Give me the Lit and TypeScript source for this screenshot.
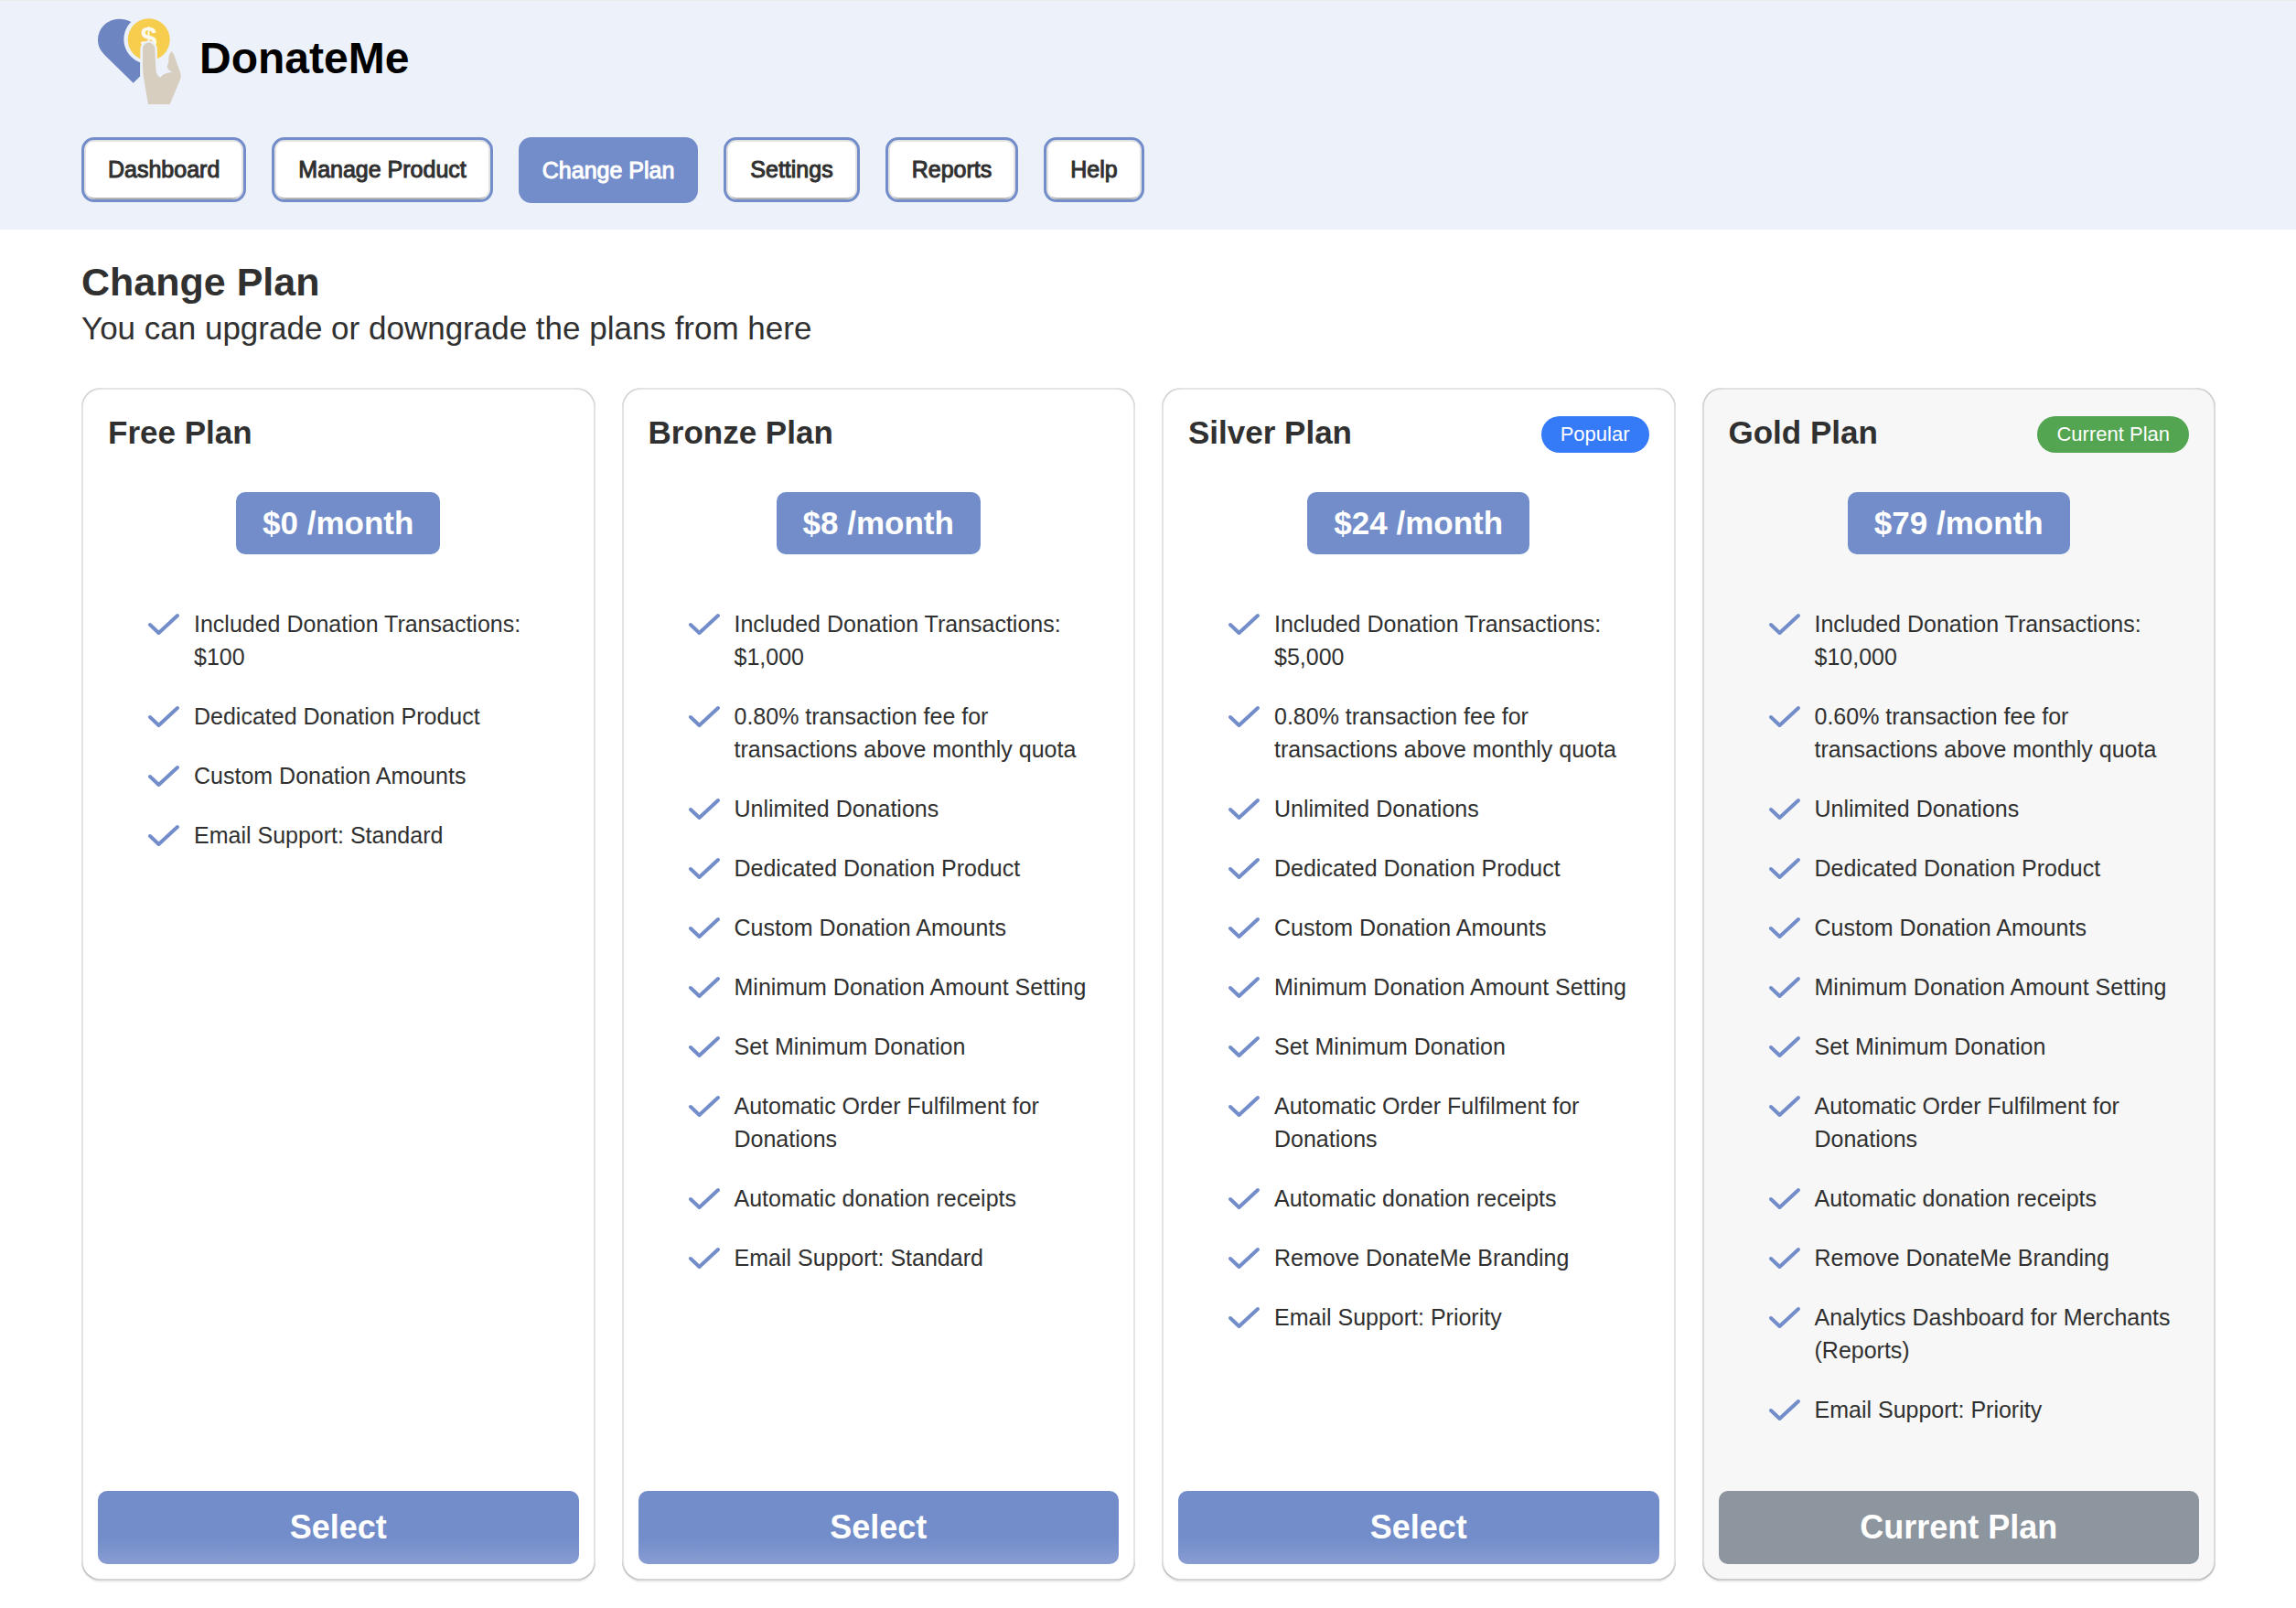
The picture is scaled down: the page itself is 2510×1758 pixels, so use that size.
import { LitElement, html, css, svg, nothing } from "lit";
import { customElement, property } from "lit/decorators.js";
import { classMap } from "lit/directives/class-map.js";

interface Plan {
  name: string;
  price: string;
  badge?: string;
  current?: boolean;
  features: string[];
}

const FULFILMENT = "Automatic Order Fulfilment for Donations";
const OVERAGE = "transaction fee for transactions above monthly quota";
const COMMON = [
  "Unlimited Donations",
  "Dedicated Donation Product",
  "Custom Donation Amounts",
  "Minimum Donation Amount Setting",
  "Set Minimum Donation",
  FULFILMENT,
  "Automatic donation receipts",
];

const PLANS: Plan[] = [
  {
    name: "Free Plan",
    price: "$0 /month",
    features: [
      "Included Donation Transactions: $100",
      "Dedicated Donation Product",
      "Custom Donation Amounts",
      "Email Support: Standard",
    ],
  },
  {
    name: "Bronze Plan",
    price: "$8 /month",
    features: [
      "Included Donation Transactions: $1,000",
      `0.80% ${OVERAGE}`,
      ...COMMON,
      "Email Support: Standard",
    ],
  },
  {
    name: "Silver Plan",
    price: "$24 /month",
    badge: "Popular",
    features: [
      "Included Donation Transactions: $5,000",
      `0.80% ${OVERAGE}`,
      ...COMMON,
      "Remove DonateMe Branding",
      "Email Support: Priority",
    ],
  },
  {
    name: "Gold Plan",
    price: "$79 /month",
    badge: "Current Plan",
    current: true,
    features: [
      "Included Donation Transactions: $10,000",
      `0.60% ${OVERAGE}`,
      ...COMMON,
      "Remove DonateMe Branding",
      "Analytics Dashboard for Merchants (Reports)",
      "Email Support: Priority",
    ],
  },
];

const TABS = ["Dashboard", "Manage Product", "Change Plan", "Settings", "Reports", "Help"];

const FINGER =
  "M53 41 A6.7 7.3 0 0 1 66.3 41 L67.3 63 C67.6 68 69 71 72.3 72.7 C75 69 79 67.5 86 66.7 " +
  "C82 65.5 80 63.5 79.7 60.7 C81.3 57 81.7 54 81.3 49.7 L84.3 44 L87 47.3 L93.7 66.3 " +
  "C95 70 95 72 94 75 L82.7 102 L59 102 L54.3 74.7 C53.3 68 53 62 53 56.3 Z";

const logo = svg`
  <path fill="#6d86c2" d="M40.3 12 C36 9.8 32 8.7 27 8.7 A23 23 0 0 0 4 31.3 C4 38 6.5 43 11 47.7 L42.7 78.7 L50.3 71.3 L50.3 56.2 A26.7 26.7 0 0 1 40.3 12 Z"/>
  <circle cx="59.7" cy="31.3" r="23" fill="#f6cd4c"/>
  <text x="59.7" y="40" text-anchor="middle" font-family="Liberation Sans, Arial, sans-serif" font-size="32" font-weight="700" fill="#fdfaf0">$</text>
  <path fill="#ecf1fa" d="M50.3 71.3 V41 A9.4 10.3 0 0 1 68.9 41 V60 H60 Z"/>
  <path fill="#d7cec0" d="${FINGER}"/>`;

@customElement("plan-card")
export class PlanCard extends LitElement {
  @property({ attribute: false }) plan!: Plan;

  static styles = css`
    :host {
      display: flex;
    }
    .card {
      flex: 1;
      min-width: 0;
      box-sizing: border-box;
      display: flex;
      flex-direction: column;
      padding: 27px 18px 18px;
      border-radius: 21px;
      background: #fff;
      box-shadow:
        inset 2px 0 0 rgba(0, 0, 0, 0.11),
        inset -2px 0 0 rgba(0, 0, 0, 0.11),
        inset 0 -2px 0 rgba(0, 0, 0, 0.17),
        inset 0 2px 0 rgba(204, 204, 204, 0.5),
        0 2px 0 rgba(26, 26, 26, 0.07);
    }
    .current {
      background: #f7f7f7;
    }
    .top {
      display: flex;
      justify-content: space-between;
      align-items: flex-end;
      padding: 0 11px;
    }
    .name {
      margin: 0;
      font-size: 35px;
      line-height: 44px;
    }
    .badge {
      padding: 0 21px;
      border-radius: 20px;
      background: #357af6;
      color: #fff;
      font-size: 22px;
      line-height: 40px;
    }
    .current .badge {
      background: #53a551;
    }
    .price {
      align-self: center;
      margin: 43px 0 58px;
      padding: 0 29px;
      border-radius: 10px;
      background: #728dca;
      color: #fff;
      font-size: 35px;
      font-weight: 700;
      line-height: 68px;
    }
    .features {
      list-style: none;
      margin: 0 0 71px;
      padding: 0 10px 0 54px;
      display: flex;
      flex-direction: column;
      gap: 29px;
    }
    .feature {
      display: flex;
      align-items: flex-start;
      gap: 15px;
      font-size: 25px;
      line-height: 36px;
    }
    .tick {
      flex: none;
      width: 36px;
      height: 36px;
      fill: none;
      stroke: #728dca;
      stroke-width: 4;
      stroke-linecap: round;
      stroke-linejoin: round;
    }
    .select {
      margin-top: auto;
      padding: 0;
      border: 0;
      border-radius: 10px;
      background: linear-gradient(#728dca 64%, #889dd2);
      color: #fff;
      font: 700 36px/80px "Liberation Sans", Arial, sans-serif;
    }
    .select:disabled {
      background: #8d959f;
    }
  `;

  render() {
    const { name, price, badge, current = false, features } = this.plan;
    return html`
      <article class=${classMap({ card: true, current })}>
        <header class="top">
          <h2 class="name">${name}</h2>
          ${badge ? html`<span class="badge">${badge}</span>` : nothing}
        </header>
        <div class="price">${price}</div>
        <ul class="features">
          ${features.map(
            (feature) => html`<li class="feature">
              <svg class="tick" viewBox="0 0 36 36" aria-hidden="true">
                <path d="M3 19 L12.5 28 L33 9" />
              </svg>
              <span>${feature}</span>
            </li>`,
          )}
        </ul>
        <button class="select" type="button" ?disabled=${current}>
          ${current ? "Current Plan" : "Select"}
        </button>
      </article>
    `;
  }
}

@customElement("app-root")
export class AppRoot extends LitElement {
  static styles = css`
    :host {
      display: block;
      color: #303030;
      background: #fff;
      font-family: "Liberation Sans", Arial, sans-serif;
    }
    .masthead {
      padding: 11px 89px 29px;
      border-top: 1px solid #ebebeb;
      background: #ecf1fa;
    }
    .brand {
      display: flex;
      align-items: center;
      gap: 15px;
      padding-left: 14px;
      color: #000;
      font-size: 48px;
      font-weight: 700;
      line-height: 56px;
    }
    .logo {
      width: 100px;
      height: 104px;
    }
    .tabs {
      display: flex;
      flex-wrap: wrap;
      align-items: flex-start;
      gap: 28px;
      margin-top: 34px;
      min-height: 72px;
    }
    .tab {
      padding: 0 26px;
      border: 3px solid #728dca;
      border-radius: 14px;
      background: #fff;
      box-shadow:
        inset 2px 0 0 #e3e3e3,
        inset -2px 0 0 #e3e3e3,
        inset 0 -2px 0 #b5b5b5,
        inset 0 2px 0 #e3e3e3;
      color: #303030;
      font: 25px/65px "Liberation Sans", Arial, sans-serif;
      -webkit-text-stroke: 1px currentColor;
    }
    .active {
      border-width: 0;
      background: #728dca;
      box-shadow: none;
      color: #fff;
      line-height: 72px;
    }
    .content {
      padding: 31px 88px 29px 89px;
    }
    .title {
      margin: 0;
      font-size: 43px;
      line-height: 52px;
    }
    .lead {
      margin: 0 0 40px;
      font-size: 35px;
      line-height: 50px;
    }
    .plans {
      display: grid;
      grid-template-columns: repeat(4, minmax(0, 1fr));
      gap: 29px;
    }
  `;

  render() {
    return html`
      <header class="masthead">
        <div class="brand">
          <svg class="logo" viewBox="0 0 100 104" aria-hidden="true">${logo}</svg>
          <span>DonateMe</span>
        </div>
        <nav class="tabs">
          ${TABS.map(
            (tab) => html`<button
              type="button"
              class=${classMap({ tab: true, active: tab === "Change Plan" })}
            >${tab}</button>`,
          )}
        </nav>
      </header>
      <main class="content">
        <h1 class="title">Change Plan</h1>
        <p class="lead">You can upgrade or downgrade the plans from here</p>
        <section class="plans">
          ${PLANS.map((plan) => html`<plan-card .plan=${plan}></plan-card>`)}
        </section>
      </main>
    `;
  }
}
